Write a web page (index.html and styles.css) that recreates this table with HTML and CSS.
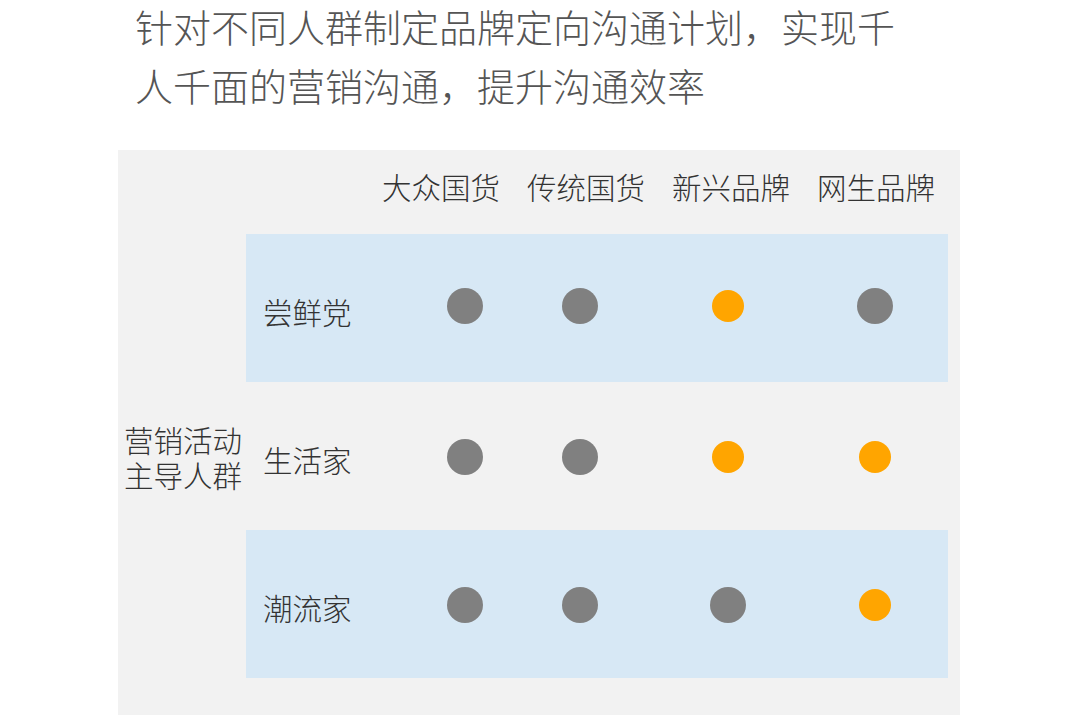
FILE: index.html
```html
<!DOCTYPE html>
<html lang="zh">
<head>
<meta charset="utf-8">
<link rel="stylesheet" href="styles.css">
</head>
<body>
<div class="page">
  <p class="intro">针对不同人群制定品牌定向沟通计划，实现千<br>人千面的营销沟通，提升沟通效率</p>
  <section class="panel">
    <div class="header">
      <span>大众国货</span><span>传统国货</span><span>新兴品牌</span><span>网生品牌</span>
    </div>
    <div class="body">
      <div class="side">营销活动<br>主导人群</div>
      <div class="rows">
        <div class="row blue first">
          <div class="name">尝鲜党</div>
          <div class="cell"><i class="dot gray"></i></div>
          <div class="cell"><i class="dot gray"></i></div>
          <div class="cell"><i class="dot orange"></i></div>
          <div class="cell"><i class="dot gray"></i></div>
        </div>
        <div class="row">
          <div class="name">生活家</div>
          <div class="cell"><i class="dot gray"></i></div>
          <div class="cell"><i class="dot gray"></i></div>
          <div class="cell"><i class="dot orange"></i></div>
          <div class="cell"><i class="dot orange"></i></div>
        </div>
        <div class="row blue">
          <div class="name">潮流家</div>
          <div class="cell"><i class="dot gray"></i></div>
          <div class="cell"><i class="dot gray"></i></div>
          <div class="cell"><i class="dot gray"></i></div>
          <div class="cell"><i class="dot orange"></i></div>
        </div>
      </div>
    </div>
  </section>
</div>
</body>
</html>
```
FILE: styles.css
```css
* { box-sizing: border-box; }
html, body { margin: 0; padding: 0; background: #fff; }
body {
  width: 1080px;
  height: 715px;
  overflow: hidden;
  font-family: "Noto Sans CJK SC", "Noto Sans", sans-serif;
  font-weight: 300;
}
.page { display: flex; flex-direction: column; }
.intro {
  margin: -4px 0 0 135px;
  font-size: 38px;
  line-height: 59px;
  color: #555;
  height: 154px;
}
.panel {
  margin-left: 118px;
  width: 842px;
  height: 600px;
  background: #f2f2f2;
  padding: 16px 12px 0 0;
  display: flex;
  flex-direction: column;
}
.header {
  display: flex;
  gap: 27px;
  padding-left: 264px;
  font-size: 29.5px;
  line-height: 40px;
  color: #333;
  height: 40px;
  margin-bottom: 28px;
}
.header span { white-space: nowrap; }
.body { display: flex; align-items: center; }
.side {
  width: 128px;
  padding-left: 6px;
  font-size: 29.5px;
  line-height: 35px;
  color: #333;
  padding-top: 2px;
}
.rows { display: flex; flex-direction: column; width: 702px; }
.row {
  display: grid;
  grid-template-columns: 162px 114px 116px 180px 114px auto;
  align-items: center;
  height: 148px;
}
.row.blue { background: #d7e8f5; }
.row.first .cell { padding-bottom: 6px; }
.name {
  padding-left: 17px;
  font-size: 29.5px;
  color: #333;
  padding-top: 6px;
}
.cell { display: flex; justify-content: center; align-items: center; padding-top: 2px; }
.dot { display: block; border-radius: 50%; }
.dot.gray { width: 36px; height: 36px; background: #808080; }
.dot.orange { width: 32px; height: 32px; background: #ffa500; }
```
